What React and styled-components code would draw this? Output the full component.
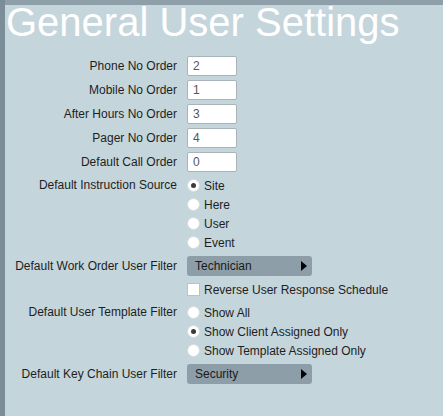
import React from "react";
import styled, { createGlobalStyle } from "styled-components";

const Global = createGlobalStyle`
  html, body { margin: 0; padding: 0; }
  body {
    font-family: "Liberation Sans", Arial, sans-serif;
    background: #8e9fa9;
  }
`;

const Frame = styled.div`
  min-height: 416px;
  box-sizing: border-box;
  padding: 5px 0 0 5px;
  background: linear-gradient(to right, #7b8d99 0 5px, #8e9fa9 5px);
  display: flex;
`;

const Panel = styled.div`
  flex: 1;
  background: #c5d5dc;
  padding: 1px 0 20px 1px;
`;

const Title = styled.h1`
  margin: 0;
  font-size: 40px;
  line-height: 32px;
  font-weight: normal;
  color: #ffffff;
  white-space: nowrap;
`;

const Form = styled.div`
  display: grid;
  grid-template-columns: 171px auto;
  column-gap: 10px;
  row-gap: 4px;
  margin-top: 18px;
  font-size: 12px;
  color: #1e1e1e;
  align-items: start;
`;

const Label = styled.div`
  text-align: right;
  white-space: nowrap;
  line-height: ${(p) => p.$h || 20}px;
`;

const NumberInput = styled.input`
  box-sizing: border-box;
  width: 50px;
  height: 20px;
  margin: 0;
  border: 1px solid #a9b3b8;
  border-radius: 2px;
  background: #fff;
  font-family: "Liberation Sans", Arial, sans-serif;
  font-size: 12px;
  color: #555;
  padding: 0 5px;
  outline: none;
`;

const Group = styled.div`
  display: flex;
  flex-direction: column;
`;

const Option = styled.label`
  display: flex;
  align-items: center;
  height: 19px;
  gap: 4px;
  white-space: nowrap;
`;

const Radio = styled.span`
  box-sizing: border-box;
  width: 13px;
  height: 13px;
  border-radius: 50%;
  background: #fff;
  border: 1px solid #d5dde1;
  display: flex;
  align-items: center;
  justify-content: center;
  &::after {
    content: "";
    width: 5px;
    height: 5px;
    border-radius: 50%;
    background: ${(p) => (p.$checked ? "#3a3a3a" : "transparent")};
  }
`;

const Check = styled.span`
  box-sizing: border-box;
  width: 13px;
  height: 13px;
  background: #fff;
  border: 1px solid #b8c2c7;
`;

const Select = styled.div`
  box-sizing: border-box;
  width: 125px;
  height: 20px;
  background: #8d9ea8;
  border-radius: 3px;
  display: flex;
  align-items: center;
  justify-content: space-between;
  padding: 0 5px 0 8px;
  color: #1a1a1a;
`;

const Arrow = styled.span`
  width: 0;
  height: 0;
  border-top: 5px solid transparent;
  border-bottom: 5px solid transparent;
  border-left: 6px solid #000;
`;

const Empty = styled.div``;

const RadioGroup = ({ options, selected }) => (
  <Group>
    {options.map((o) => (
      <Option key={o}>
        <Radio $checked={o === selected} />
        {o}
      </Option>
    ))}
  </Group>
);

export default function App() {
  const nums = [
    ["Phone No Order", "2"],
    ["Mobile No Order", "1"],
    ["After Hours No Order", "3"],
    ["Pager No Order", "4"],
    ["Default Call Order", "0"],
  ];
  return (
    <>
      <Global />
      <Frame>
        <Panel>
          <Title>General User Settings</Title>
          <Form>
            {nums.map(([l, v]) => (
              <React.Fragment key={l}>
                <Label>{l}</Label>
                <NumberInput defaultValue={v} />
              </React.Fragment>
            ))}
            <Label $h={19}>Default Instruction Source</Label>
            <RadioGroup options={["Site", "Here", "User", "Event"]} selected="Site" />
            <Label>Default Work Order User Filter</Label>
            <Select>
              Technician
              <Arrow />
            </Select>
            <Empty />
            <Option>
              <Check />
              Reverse User Response Schedule
            </Option>
            <Label $h={19}>Default User Template Filter</Label>
            <RadioGroup
              options={["Show All", "Show Client Assigned Only", "Show Template Assigned Only"]}
              selected="Show Client Assigned Only"
            />
            <Label>Default Key Chain User Filter</Label>
            <Select>
              Security
              <Arrow />
            </Select>
          </Form>
        </Panel>
      </Frame>
    </>
  );
}
